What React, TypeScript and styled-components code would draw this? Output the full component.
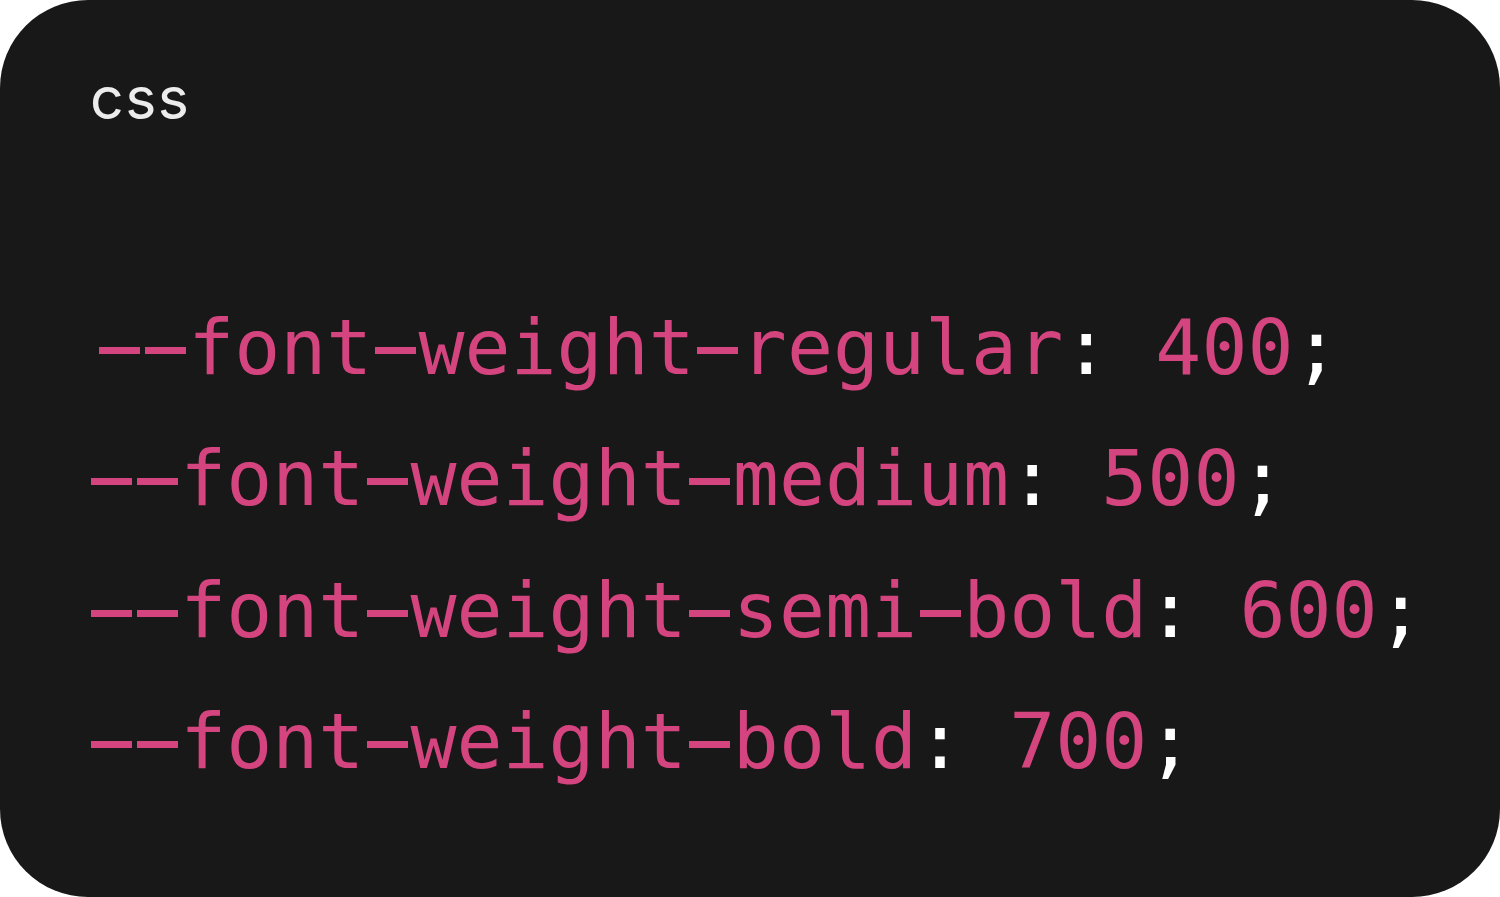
import React from "react";
import styled, { createGlobalStyle } from "styled-components";

const GlobalStyle = createGlobalStyle`
  html, body {
    margin: 0;
    padding: 0;
    background: #ffffff;
  }
`;

const PINK = "#d4447e";

const Card = styled.div`
  box-sizing: border-box;
  width: 1500px;
  height: 897px;
  background: #181818;
  border-radius: 88px;
  padding: 69px 0 0 88px;
  display: flex;
  flex-direction: column;
  overflow: hidden;
`;

const Lang = styled.div`
  font-family: Inter, "Noto Sans", sans-serif;
  font-size: 59px;
  line-height: 58px;
  letter-spacing: 1.5px;
  color: #ececec;
  margin: 0 0 155px 2px;
`;

const Code = styled.pre`
  margin: 0;
  font-family: "DejaVu Sans Mono", "Liberation Mono", monospace;
  font-size: 76.5px;
  line-height: 131.3px;
  color: ${PINK};
  display: flex;
  flex-direction: column;
`;

const Line = styled.div<{ $indent?: number }>`
  padding-left: ${(p) => p.$indent ?? 0}px;
  white-space: pre;
`;

/* Long hyphen as in the reference font: the "-" stays as text, drawn as a
   wide bar that fills its own advance box. */
const Dash = styled.span`
  display: inline-block;
  color: transparent;
  background-image: linear-gradient(${PINK}, ${PINK});
  background-repeat: no-repeat;
  background-size: 41px 7px;
  background-position: center 65px;
`;

const Punct = styled.span`
  color: #ffffff;
`;

const lines = [
  { name: "--font-weight-regular", value: "400", indent: 8 },
  { name: "--font-weight-medium", value: "500", indent: 0 },
  { name: "--font-weight-semi-bold", value: "600", indent: 0 },
  { name: "--font-weight-bold", value: "700", indent: 0 },
];

function Name({ text }: { text: string }) {
  const parts = text.split("-");
  return (
    <>
      {parts.map((part, i) => (
        <React.Fragment key={i}>
          {i > 0 && <Dash>-</Dash>}
          {part}
        </React.Fragment>
      ))}
    </>
  );
}

export default function App() {
  return (
    <>
      <GlobalStyle />
      <Card>
        <Lang>css</Lang>
        <Code>
          {lines.map((l) => (
            <Line key={l.name} $indent={l.indent}>
              <Name text={l.name} />
              <Punct>:</Punct> {l.value}
              <Punct>;</Punct>
            </Line>
          ))}
        </Code>
      </Card>
    </>
  );
}
